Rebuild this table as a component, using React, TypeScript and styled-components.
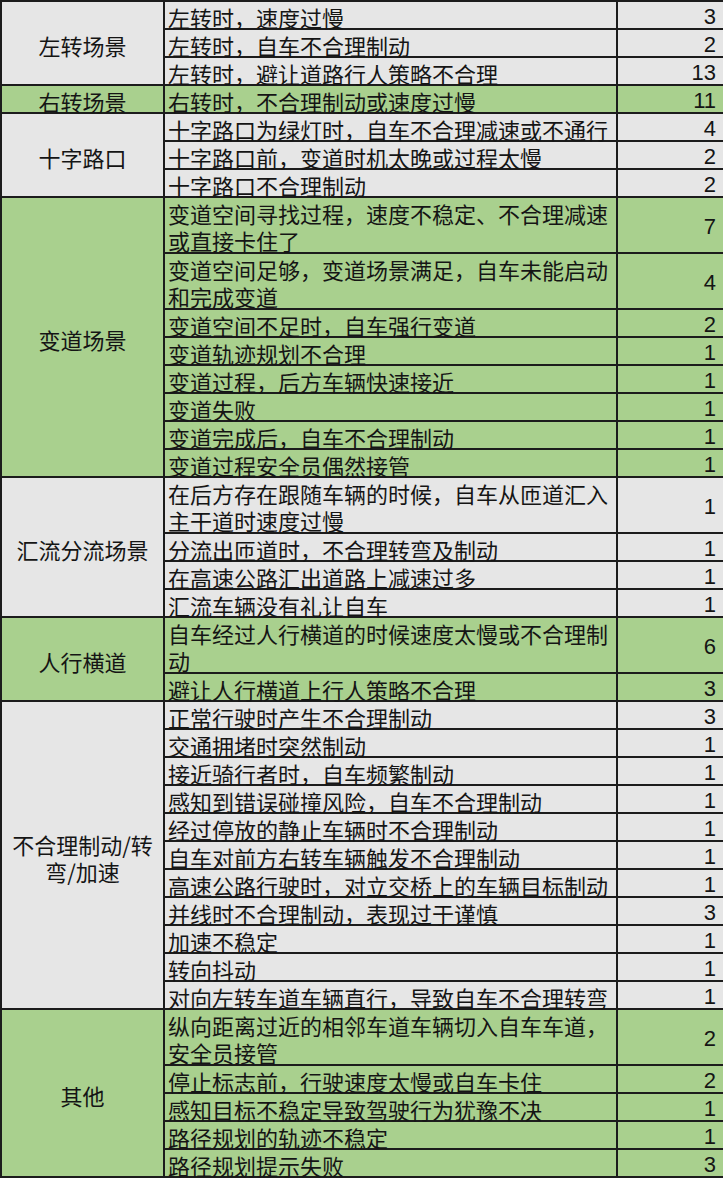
import React from "react";
import styled, { createGlobalStyle } from "styled-components";

const GlobalStyle = createGlobalStyle`
  html, body {
    margin: 0;
    padding: 0;
    background: #ffffff;
  }
  body {
    font-family: "Noto Sans CJK SC", "Noto Sans", sans-serif;
  }
`;

type Tone = "gray" | "green";

type Item = { lines: string[]; count: number };
type Group = { name: string[]; tone: Tone; items: Item[] };

const toneColor: Record<Tone, string> = {
  gray: "#e6e6e6",
  green: "#a9d08e",
};

const it = (text: string | string[], count: number): Item => ({
  lines: Array.isArray(text) ? text : [text],
  count,
});

const groups: Group[] = [
  {
    name: ["左转场景"],
    tone: "gray",
    items: [
      it("左转时，速度过慢", 3),
      it("左转时，自车不合理制动", 2),
      it("左转时，避让道路行人策略不合理", 13),
    ],
  },
  {
    name: ["右转场景"],
    tone: "green",
    items: [it("右转时，不合理制动或速度过慢", 11)],
  },
  {
    name: ["十字路口"],
    tone: "gray",
    items: [
      it("十字路口为绿灯时，自车不合理减速或不通行", 4),
      it("十字路口前，变道时机太晚或过程太慢", 2),
      it("十字路口不合理制动", 2),
    ],
  },
  {
    name: ["变道场景"],
    tone: "green",
    items: [
      it(["变道空间寻找过程，速度不稳定、不合理减速", "或直接卡住了"], 7),
      it(["变道空间足够，变道场景满足，自车未能启动", "和完成变道"], 4),
      it("变道空间不足时，自车强行变道", 2),
      it("变道轨迹规划不合理", 1),
      it("变道过程，后方车辆快速接近", 1),
      it("变道失败", 1),
      it("变道完成后，自车不合理制动", 1),
      it("变道过程安全员偶然接管", 1),
    ],
  },
  {
    name: ["汇流分流场景"],
    tone: "gray",
    items: [
      it(["在后方存在跟随车辆的时候，自车从匝道汇入", "主干道时速度过慢"], 1),
      it("分流出匝道时，不合理转弯及制动", 1),
      it("在高速公路汇出道路上减速过多", 1),
      it("汇流车辆没有礼让自车", 1),
    ],
  },
  {
    name: ["人行横道"],
    tone: "green",
    items: [
      it(["自车经过人行横道的时候速度太慢或不合理制", "动"], 6),
      it("避让人行横道上行人策略不合理", 3),
    ],
  },
  {
    name: ["不合理制动/转", "弯/加速"],
    tone: "gray",
    items: [
      it("正常行驶时产生不合理制动", 3),
      it("交通拥堵时突然制动", 1),
      it("接近骑行者时，自车频繁制动", 1),
      it("感知到错误碰撞风险，自车不合理制动", 1),
      it("经过停放的静止车辆时不合理制动", 1),
      it("自车对前方右转车辆触发不合理制动", 1),
      it("高速公路行驶时，对立交桥上的车辆目标制动", 1),
      it("并线时不合理制动，表现过于谨慎", 3),
      it("加速不稳定", 1),
      it("转向抖动", 1),
      it("对向左转车道车辆直行，导致自车不合理转弯", 1),
    ],
  },
  {
    name: ["其他"],
    tone: "green",
    items: [
      it(["纵向距离过近的相邻车道车辆切入自车车道，", "安全员接管"], 2),
      it("停止标志前，行驶速度太慢或自车卡住", 2),
      it("感知目标不稳定导致驾驶行为犹豫不决", 1),
      it("路径规划的轨迹不稳定", 1),
      it("路径规划提示失败", 3),
    ],
  },
];

const Sheet = styled.div`
  position: relative;
  width: 723px;
  box-sizing: border-box;
  padding: 2px 0 2px 2px;
  background: #1c1c1c;
  display: flex;
  flex-direction: column;
  gap: 2px;
  color: #151515;
  overflow: hidden;
`;

const GroupRow = styled.div`
  display: flex;
  gap: 2px;
`;

const Category = styled.div<{ $tone: Tone }>`
  width: 161px;
  flex: none;
  background: ${(p) => toneColor[p.$tone]};
  display: flex;
  flex-direction: column;
  align-items: center;
  justify-content: center;
  gap: 5px;
  text-align: center;
  font-size: 22px;
  line-height: 22px;
  padding-top: 4px;
  box-sizing: border-box;
  white-space: nowrap;
`;

const Items = styled.div`
  flex: 1;
  display: flex;
  flex-direction: column;
  gap: 2px;
`;

const ItemRow = styled.div<{ $lines: number }>`
  display: grid;
  grid-template-columns: 451px 1fr;
  grid-template-rows: minmax(0, 1fr);
  gap: 2px;
  height: ${(p) => p.$lines * 28 - 2}px;
`;

const Desc = styled.div<{ $tone: Tone }>`
  min-height: 0;
  background: ${(p) => toneColor[p.$tone]};
  display: flex;
  flex-direction: column;
  justify-content: center;
  gap: 5px;
  padding: 3px 0 0 3px;
  box-sizing: border-box;
  font-size: 22px;
  line-height: 22px;
  white-space: nowrap;
`;

const Count = styled.div<{ $tone: Tone }>`
  min-height: 0;
  background: ${(p) => toneColor[p.$tone]};
  display: flex;
  align-items: center;
  justify-content: flex-end;
  padding: 4px 7px 0 0;
  box-sizing: border-box;
  font-family: "Liberation Sans", Arial, sans-serif;
  font-size: 22px;
  line-height: 22px;
`;

const Line = styled.span`
  display: block;
  flex: none;
`;

export default function App() {
  return (
    <>
      <GlobalStyle />
      <Sheet>
        {groups.map((g) => (
          <GroupRow key={g.name.join("")}>
            <Category $tone={g.tone}>
              {g.name.map((n) => (
                <Line key={n}>{n}</Line>
              ))}
            </Category>
            <Items>
              {g.items.map((item) => (
                <ItemRow key={item.lines.join("")} $lines={item.lines.length}>
                  <Desc $tone={g.tone}>
                    {item.lines.map((l) => (
                      <Line key={l}>{l}</Line>
                    ))}
                  </Desc>
                  <Count $tone={g.tone}>{item.count}</Count>
                </ItemRow>
              ))}
            </Items>
          </GroupRow>
        ))}
      </Sheet>
    </>
  );
}
